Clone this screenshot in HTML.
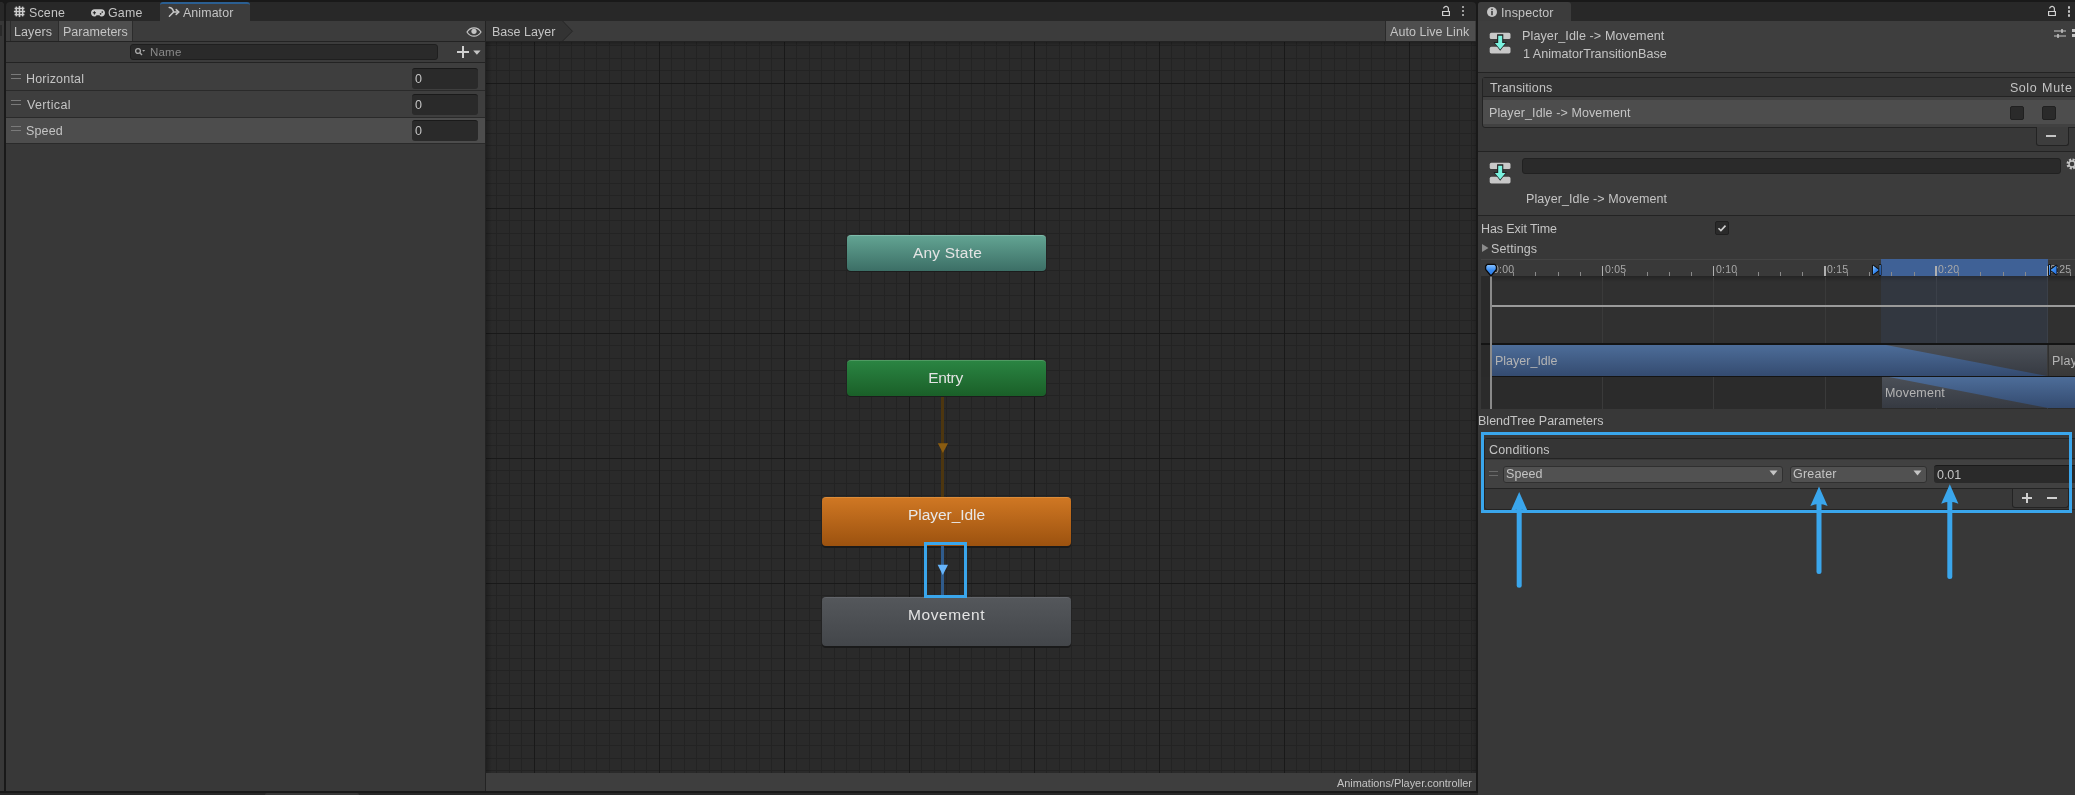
<!DOCTYPE html>
<html><head><meta charset="utf-8">
<style>
*{box-sizing:border-box;margin:0;padding:0}
html,body{width:2075px;height:795px;overflow:hidden;background:#191919;font-family:"Liberation Sans",sans-serif;font-size:12.5px;color:#c4c4c4}
.a{position:absolute}
.t{position:absolute;white-space:pre;line-height:16px;height:16px;letter-spacing:0.2px;will-change:transform}
</style></head><body>

<!-- ============ ANIMATOR DOCK ============ -->
<!-- left sliver -->
<div class="a" style="left:0;top:2px;width:4px;height:789px;background:#383838;border-top-right-radius:4px"></div>
<div class="a" style="left:0;top:2px;width:4px;height:19px;background:#282828;border-top-right-radius:4px"></div>
<div class="a" style="left:0;top:25px;width:2px;height:11px;background:#2a2a2a"></div>
<div class="a" style="left:0;top:793px;width:2075px;height:2px;background:#282828"></div>
<div class="a" style="left:265px;top:793px;width:94px;height:2px;background:#383838;border-radius:2px 2px 0 0"></div>

<!-- tab strip -->
<div class="a" style="left:6px;top:2px;width:1470px;height:19px;background:#282828;border-top-left-radius:4px;border-top-right-radius:4px"></div>
<div class="t" style="left:29.4px;top:5px;font-size:12.4px;letter-spacing:0.18px">Scene</div>
<div class="t" style="left:108.4px;top:5px;font-size:12.4px;letter-spacing:0.2px">Game</div>
<div class="a" style="left:160px;top:2px;width:90px;height:19px;background:#3c3c3c;border-top-left-radius:3px;border-top-right-radius:3px;border-top:2px solid #2b5f92"></div>
<div class="t" style="left:182.8px;top:5px;font-size:12.4px;letter-spacing:0.10px">Animator</div>

<!-- toolbar -->
<div class="a" style="left:6px;top:21px;width:1470px;height:20px;background:#3c3c3c"></div>
<div class="a" style="left:6px;top:41px;width:1470px;height:1px;background:#232323"></div>
<div class="a" style="left:10px;top:21px;width:1px;height:20px;background:#2c2c2c"></div>
<div class="a" style="left:58px;top:21px;width:1px;height:20px;background:#2c2c2c"></div>
<div class="a" style="left:132px;top:21px;width:1px;height:20px;background:#2c2c2c"></div>
<div class="t" style="left:14.2px;top:23.5px;letter-spacing:0.10px">Layers</div>
<div class="a" style="left:59px;top:21px;width:73px;height:20px;background:#4e4e4e"></div>
<div class="t" style="left:63.3px;top:23.5px;letter-spacing:0.02px">Parameters</div>
<div class="a" style="left:485px;top:21px;width:1px;height:770px;background:#232323"></div>

<!-- tab icons -->
<svg class="a" style="left:13px;top:5px" width="13" height="13"><rect x="4.1" y="4.2" width="4.8" height="4.6" fill="#0c0c0c"/><g fill="#cbcbcb"><rect x="2.6" y="1.6" width="1.5" height="9.8"/><rect x="5.7" y="0.9" width="1.6" height="11.2"/><rect x="8.9" y="1.6" width="1.5" height="9.8"/><rect x="1.6" y="2.7" width="9.8" height="1.5"/><rect x="0.9" y="5.7" width="11.2" height="1.6"/><rect x="1.6" y="8.8" width="9.8" height="1.5"/></g></svg>
<svg class="a" style="left:90px;top:8px" width="16" height="10"><path d="M4.6 1.2h6.8c2.2 0 3.6 1.6 3.6 3.6s-1.4 3.8-3.4 3.8c-1 0-1.6-.8-2.2-1.4H6.6c-.6.6-1.2 1.4-2.2 1.4C2.4 8.6 1 6.8 1 4.8S2.4 1.2 4.6 1.2z" fill="#cbcbcb"/><path d="M2.8 4.8h3.2M4.4 3.2v3.2" stroke="#262626" stroke-width="1.1"/><circle cx="10.6" cy="5.8" r=".85" fill="#262626"/><circle cx="12.3" cy="4" r=".85" fill="#262626"/></svg>
<svg class="a" style="left:167px;top:5px" width="14" height="13"><path d="M2.2 2.6c2.2 0 3.6 1.2 4.4 4.4H11.6M2.4 11.2L6.4 7.2" fill="none" stroke="#c8c8c8" stroke-width="1.5" stroke-linecap="round"/><path d="M9.2 4.6L11.8 7L9.2 9.4" fill="none" stroke="#c8c8c8" stroke-width="1.5" stroke-linecap="round" stroke-linejoin="round"/></svg>
<!-- eye -->
<svg class="a" style="left:466px;top:27px" width="16" height="10"><path d="M1 5C3 1.8 5.3.8 8 .8S13 1.8 15 5C13 8.2 10.7 9.2 8 9.2S3 8.2 1 5z" fill="none" stroke="#c4c4c4" stroke-width="1.2"/><circle cx="8" cy="4.3" r="2.6" fill="#c4c4c4"/></svg>
<!-- breadcrumb -->
<svg class="a" style="left:486px;top:21px" width="90" height="20"><path d="M0 0H76.6L86.4 10.2L76.6 20H0z" fill="#333333"/><path d="M76.6 0L86.4 10.2L76.6 20" fill="none" stroke="#262626" stroke-width="1"/></svg>
<div class="t" style="left:492.4px;top:23.5px;letter-spacing:0.02px">Base Layer</div>
<div class="a" style="left:1385px;top:21px;width:1px;height:20px;background:#2a2a2a"></div>
<div class="a" style="left:1386px;top:21px;width:89px;height:20px;background:#4e4e4e"></div>
<div class="t" style="left:1390.2px;top:23.5px;letter-spacing:0.05px">Auto Live Link</div>

<!-- left panel -->
<div class="a" style="left:6px;top:42px;width:479px;height:749px;background:#383838"></div>
<div class="a" style="left:6px;top:42px;width:479px;height:20px;background:#3c3c3c"></div>
<div class="a" style="left:130px;top:44px;width:308px;height:16px;background:#2a2a2a;border:1px solid #1f1f1f;border-radius:3px"></div>
<div class="t" style="left:149.5px;top:44px;font-size:11.5px;color:#8a8a8a">Name</div>
<div class="a" style="left:6px;top:62px;width:479px;height:1px;background:#232323"></div>
<div class="a" style="left:6px;top:63px;width:479px;height:27px;background:#3e3e3e"></div>
<div class="a" style="left:6px;top:90px;width:479px;height:1px;background:#2a2a2a"></div>
<div class="a" style="left:6px;top:91px;width:479px;height:26px;background:#3e3e3e"></div>
<div class="a" style="left:6px;top:117px;width:479px;height:1px;background:#2a2a2a"></div>
<div class="a" style="left:6px;top:118px;width:479px;height:25px;background:#4d4d4d"></div>
<div class="a" style="left:6px;top:143px;width:479px;height:1px;background:#2a2a2a"></div>
<div class="t" style="left:26.2px;top:70.6px;letter-spacing:0.19px">Horizontal</div>
<div class="t" style="left:26.7px;top:96.6px;letter-spacing:0.36px">Vertical</div>
<div class="t" style="left:26.2px;top:123.4px;letter-spacing:0.15px">Speed</div>
<div class="a" style="left:412px;top:68px;width:66px;height:21px;background:#2a2a2a;border-top:1px solid #1a1a1a;border-radius:3px"></div>
<div class="a" style="left:412px;top:94px;width:66px;height:21px;background:#2a2a2a;border-top:1px solid #1a1a1a;border-radius:3px"></div>
<div class="a" style="left:412px;top:120px;width:66px;height:21px;background:#2a2a2a;border-top:1px solid #1a1a1a;border-radius:3px"></div>
<div class="t" style="left:415.2px;top:70.8px">0</div>
<div class="t" style="left:415.2px;top:96.8px">0</div>
<div class="t" style="left:415.2px;top:122.8px">0</div>
<!-- plus dropdown -->
<div class="a" style="left:457px;top:51.2px;width:12.2px;height:1.8px;background:#d0d0d0"></div>
<div class="a" style="left:462.2px;top:46px;width:1.8px;height:12.2px;background:#d0d0d0"></div>
<svg class="a" style="left:473px;top:49.5px" width="8" height="5"><path d="M0.2 0.5h7.4L3.9 4.8z" fill="#c4c4c4"/></svg>
<!-- search icon -->
<svg class="a" style="left:134px;top:47px" width="12" height="10"><circle cx="4" cy="4" r="2.4" fill="none" stroke="#a8a8a8" stroke-width="1.3"/><path d="M5.8 5.8L8 8" stroke="#a8a8a8" stroke-width="1.4"/><path d="M8.2 3h3l-1.5 1.8z" fill="#a8a8a8"/></svg>
<!-- drag handles -->
<div class="a" style="left:11px;top:74px;width:10px;height:1px;background:#7a7a7a"></div>
<div class="a" style="left:11px;top:77.5px;width:10px;height:1px;background:#7a7a7a"></div>
<div class="a" style="left:11px;top:100px;width:10px;height:1px;background:#7a7a7a"></div>
<div class="a" style="left:11px;top:103.5px;width:10px;height:1px;background:#7a7a7a"></div>
<div class="a" style="left:11px;top:126px;width:10px;height:1px;background:#7a7a7a"></div>
<div class="a" style="left:11px;top:129.5px;width:10px;height:1px;background:#7a7a7a"></div>


<!-- graph -->
<div class="a" style="left:486px;top:42px;width:990px;height:731px;background:#2a2a2a"></div>

<svg class="a" style="left:486px;top:42px" width="990" height="731" shape-rendering="crispEdges"><path fill="#232323" d="M10 0h1V731h-1zM23 0h1V731h-1zM35 0h1V731h-1zM60 0h1V731h-1zM73 0h1V731h-1zM85 0h1V731h-1zM98 0h1V731h-1zM110 0h1V731h-1zM123 0h1V731h-1zM135 0h1V731h-1zM148 0h1V731h-1zM160 0h1V731h-1zM185 0h1V731h-1zM198 0h1V731h-1zM210 0h1V731h-1zM223 0h1V731h-1zM235 0h1V731h-1zM248 0h1V731h-1zM260 0h1V731h-1zM273 0h1V731h-1zM285 0h1V731h-1zM310 0h1V731h-1zM323 0h1V731h-1zM335 0h1V731h-1zM348 0h1V731h-1zM360 0h1V731h-1zM373 0h1V731h-1zM385 0h1V731h-1zM398 0h1V731h-1zM410 0h1V731h-1zM435 0h1V731h-1zM448 0h1V731h-1zM460 0h1V731h-1zM473 0h1V731h-1zM485 0h1V731h-1zM498 0h1V731h-1zM510 0h1V731h-1zM523 0h1V731h-1zM535 0h1V731h-1zM560 0h1V731h-1zM573 0h1V731h-1zM585 0h1V731h-1zM598 0h1V731h-1zM610 0h1V731h-1zM623 0h1V731h-1zM635 0h1V731h-1zM648 0h1V731h-1zM660 0h1V731h-1zM685 0h1V731h-1zM698 0h1V731h-1zM710 0h1V731h-1zM723 0h1V731h-1zM735 0h1V731h-1zM748 0h1V731h-1zM760 0h1V731h-1zM773 0h1V731h-1zM785 0h1V731h-1zM810 0h1V731h-1zM823 0h1V731h-1zM835 0h1V731h-1zM848 0h1V731h-1zM860 0h1V731h-1zM873 0h1V731h-1zM885 0h1V731h-1zM898 0h1V731h-1zM910 0h1V731h-1zM935 0h1V731h-1zM948 0h1V731h-1zM960 0h1V731h-1zM973 0h1V731h-1zM985 0h1V731h-1zM0 3h990v1H0zM0 16h990v1H0zM0 28h990v1H0zM0 53h990v1H0zM0 66h990v1H0zM0 78h990v1H0zM0 91h990v1H0zM0 103h990v1H0zM0 116h990v1H0zM0 128h990v1H0zM0 141h990v1H0zM0 153h990v1H0zM0 178h990v1H0zM0 191h990v1H0zM0 203h990v1H0zM0 216h990v1H0zM0 228h990v1H0zM0 241h990v1H0zM0 253h990v1H0zM0 266h990v1H0zM0 278h990v1H0zM0 303h990v1H0zM0 316h990v1H0zM0 328h990v1H0zM0 341h990v1H0zM0 353h990v1H0zM0 366h990v1H0zM0 378h990v1H0zM0 391h990v1H0zM0 403h990v1H0zM0 428h990v1H0zM0 441h990v1H0zM0 453h990v1H0zM0 466h990v1H0zM0 478h990v1H0zM0 491h990v1H0zM0 503h990v1H0zM0 516h990v1H0zM0 528h990v1H0zM0 553h990v1H0zM0 566h990v1H0zM0 578h990v1H0zM0 591h990v1H0zM0 603h990v1H0zM0 616h990v1H0zM0 628h990v1H0zM0 641h990v1H0zM0 653h990v1H0zM0 678h990v1H0zM0 691h990v1H0zM0 703h990v1H0zM0 716h990v1H0zM0 728h990v1H0z"/><path fill="#191919" d="M48 0h1V731h-1zM173 0h1V731h-1zM298 0h1V731h-1zM423 0h1V731h-1zM548 0h1V731h-1zM673 0h1V731h-1zM798 0h1V731h-1zM923 0h1V731h-1zM0 41h990v1H0zM0 166h990v1H0zM0 291h990v1H0zM0 416h990v1H0zM0 541h990v1H0zM0 666h990v1H0z"/></svg>
<!-- left shadow of graph -->
<div class="a" style="left:1471px;top:42px;width:5px;height:731px;background:linear-gradient(90deg,rgba(0,0,0,0),rgba(0,0,0,.18))"></div>
<div class="a" style="left:486px;top:42px;width:990px;height:4px;background:linear-gradient(rgba(0,0,0,.22),rgba(0,0,0,0))"></div>
<div class="a" style="left:486px;top:42px;width:6px;height:731px;background:linear-gradient(90deg,rgba(0,0,0,.25),rgba(0,0,0,0))"></div>
<!-- nodes -->
<div class="a" style="left:847px;top:236px;width:199px;height:36px;border-radius:4px;background:#1c1c1c"></div>
<div class="a" style="left:847px;top:235px;width:199px;height:36px;border-radius:4px;background:linear-gradient(#62a392,#3c6f66);border-top:1px solid #7fbcab"></div>
<div class="t" style="left:848px;top:244px;width:199px;text-align:center;font-size:15.5px;line-height:18px;height:18px;letter-spacing:0.2px;color:#e4e4e4">Any State</div>

<div class="a" style="left:941.3px;top:396px;width:2.6px;height:101px;background:#4d360f"></div>
<svg class="a" style="left:937px;top:442px" width="12" height="12"><path d="M0.8 1.2H11L5.9 11z" fill="#8a5c10"/></svg>

<div class="a" style="left:847px;top:361px;width:199px;height:36px;border-radius:4px;background:#1c1c1c"></div>
<div class="a" style="left:847px;top:360px;width:199px;height:36px;border-radius:4px;background:linear-gradient(#2a8442,#1a5f28);border-top:1px solid #4f9a62"></div>
<div class="t" style="left:845.5px;top:369px;width:199px;text-align:center;font-size:15.5px;line-height:18px;height:18px;letter-spacing:-0.3px;color:#e4e4e4">Entry</div>

<div class="a" style="left:822px;top:498px;width:249px;height:50px;border-radius:4px;background:#1a1a1a"></div>
<div class="a" style="left:822px;top:497px;width:249px;height:49px;border-radius:4px;background:linear-gradient(#cf7723,#9c520f);border-top:1px solid #dc8c38"></div>
<div class="t" style="left:822px;top:505.5px;width:249px;text-align:center;font-size:15.5px;line-height:18px;height:18px;letter-spacing:-0.05px;color:#e8e8e8">Player_Idle</div>

<div class="a" style="left:822px;top:598px;width:249px;height:50px;border-radius:4px;background:#1a1a1a"></div>
<div class="a" style="left:822px;top:597px;width:249px;height:49px;border-radius:4px;background:linear-gradient(#54575b,#43464a);border-top:1px solid #62656a"></div>
<div class="t" style="left:822px;top:605.5px;width:249px;text-align:center;font-size:15.5px;line-height:18px;height:18px;letter-spacing:0.6px;color:#e4e4e4">Movement</div>

<!-- selected transition -->
<div class="a" style="left:941px;top:546px;width:3px;height:51px;background:#2f5b8c"></div>
<svg class="a" style="left:937px;top:564px" width="12" height="12"><path d="M0.6 0.8H11L5.8 11z" fill="#66b4fa"/></svg>
<div class="a" style="left:924px;top:542px;width:43px;height:56px;border:3px solid #3aa6ec"></div>

<!-- graph bottom bar -->
<div class="a" style="left:486px;top:773px;width:990px;height:18px;background:#3e3e3e"></div>
<div class="t" style="right:603px;top:775px;font-size:10.9px;letter-spacing:0">Animations/Player.controller</div>

<!-- ============ INSPECTOR DOCK ============ -->
<div class="a" style="left:1478px;top:2px;width:597px;height:19px;background:#282828;border-top-left-radius:4px"></div>
<div class="a" style="left:1478px;top:2px;width:93px;height:19px;background:#3c3c3c;border-top-left-radius:3px;border-top-right-radius:3px"></div>
<div class="t" style="left:1500.9px;top:5px;font-size:12.5px;letter-spacing:0.14px">Inspector</div>
<div class="a" style="left:1478px;top:21px;width:597px;height:774px;background:#383838"></div>
<div class="a" style="left:1478px;top:21px;width:597px;height:51px;background:#3e3e3e"></div>
<div class="a" style="left:1478px;top:72px;width:597px;height:1px;background:#232323"></div>
<div class="t" style="left:1522.0px;top:28px;font-size:12.6px;letter-spacing:0.09px">Player_Idle -> Movement</div>
<div class="t" style="left:1523px;top:45.7px;font-size:12.6px;letter-spacing:0">1 AnimatorTransitionBase</div>


<!-- inspector tab strip icons -->
<svg class="a" style="left:1486px;top:6px" width="12" height="12"><circle cx="6" cy="6" r="5" fill="#c4c4c4"/><rect x="5.2" y="5" width="1.6" height="4.2" fill="#3c3c3c"/><rect x="5.2" y="2.6" width="1.6" height="1.5" fill="#3c3c3c"/></svg>
<svg class="a" style="left:1440px;top:4px" width="12" height="14"><path d="M2.6 7.5h6.8v4H2.6z" fill="none" stroke="#cfcfcf" stroke-width="1.2"/><path d="M8.4 7.3V5.2A2.3 2.3 0 0 0 3.6 4.5" fill="none" stroke="#cfcfcf" stroke-width="1.2"/></svg>
<div class="a" style="left:1462px;top:6px;width:2.2px;height:2.2px;background:#c4c4c4;border-radius:1px"></div>
<div class="a" style="left:1462px;top:10px;width:2.2px;height:2.2px;background:#c4c4c4;border-radius:1px"></div>
<div class="a" style="left:1462px;top:14px;width:2.2px;height:2.2px;background:#c4c4c4;border-radius:1px"></div>
<svg class="a" style="left:2046px;top:4px" width="12" height="14"><path d="M2.6 7.5h6.8v4H2.6z" fill="none" stroke="#cfcfcf" stroke-width="1.2"/><path d="M8.4 7.3V5.2A2.3 2.3 0 0 0 3.6 4.5" fill="none" stroke="#cfcfcf" stroke-width="1.2"/></svg>
<div class="a" style="left:2067.5px;top:6px;width:2.5px;height:2.5px;background:#c4c4c4;border-radius:1px"></div>
<div class="a" style="left:2067.5px;top:10px;width:2.5px;height:2.5px;background:#c4c4c4;border-radius:1px"></div>
<div class="a" style="left:2067.5px;top:14px;width:2.5px;height:2.5px;background:#c4c4c4;border-radius:1px"></div>

<!-- header icon -->
<svg class="a" style="left:1489px;top:32px" width="23" height="23"><rect x="0.7" y="0.8" width="20.8" height="6.3" rx="1.6" fill="#c8c8c8"/><rect x="0.7" y="14.8" width="20.8" height="6.6" rx="1.6" fill="#c8c8c8"/><path d="M8.1 2.2h6.2v7.9h3.6l-6.7 8.6l-6.7-8.6h3.6z" fill="#202020"/><path d="M9.2 3.8h4v7.2h3.3l-5.3 6.5l-5.3-6.5h3.3z" fill="#7af2df"/></svg>
<!-- header right icons -->
<svg class="a" style="left:2053px;top:28px" width="14" height="12"><path d="M1 3h12M1 8h12" stroke="#c4c4c4" stroke-width="1.2"/><path d="M9 1v4M5 6v4" stroke="#c4c4c4" stroke-width="1.5"/></svg>
<div class="a" style="left:2072px;top:29px;width:3px;height:2.5px;background:#c4c4c4"></div>
<div class="a" style="left:2072px;top:34px;width:3px;height:2.5px;background:#c4c4c4"></div>

<!-- transitions list -->
<div class="a" style="left:1482px;top:77px;width:600px;height:51px;border:1px solid #232323;border-radius:3px;background:#414141"></div>
<div class="a" style="left:1483px;top:78px;width:600px;height:19px;background:#353535;border-bottom:1px solid #232323"></div>
<div class="t" style="left:1489.8px;top:80px;letter-spacing:0.16px">Transitions</div>
<div class="t" style="left:2010.0px;top:80px;letter-spacing:0.53px">Solo</div>
<div class="t" style="left:2042.0px;top:80px;letter-spacing:0.73px">Mute</div>
<div class="a" style="left:1483px;top:100px;width:600px;height:24px;background:#4d4d4d"></div>
<div class="t" style="left:1488.8px;top:105px;letter-spacing:0.10px">Player_Idle -> Movement</div>
<div class="a" style="left:2010px;top:106px;width:14px;height:14px;background:#2a2a2a;border:1px solid #202020;border-radius:2px"></div>
<div class="a" style="left:2042px;top:106px;width:14px;height:14px;background:#2a2a2a;border:1px solid #202020;border-radius:2px"></div>
<div class="a" style="left:2036px;top:127px;width:33px;height:19px;background:#3d3d3d;border:1px solid #232323;border-top:none;border-radius:0 0 3px 3px"></div>
<div class="a" style="left:2046px;top:135px;width:10px;height:2px;background:#c4c4c4"></div>

<div class="a" style="left:1478px;top:151px;width:597px;height:1px;background:#232323"></div>
<div class="a" style="left:1478px;top:152px;width:597px;height:63px;background:#3c3c3c"></div>
<div class="a" style="left:1478px;top:215px;width:597px;height:1px;background:#232323"></div>
<svg class="a" style="left:1489px;top:162px" width="23" height="23"><rect x="0.7" y="0.8" width="20.8" height="6.3" rx="1.6" fill="#c8c8c8"/><rect x="0.7" y="14.8" width="20.8" height="6.6" rx="1.6" fill="#c8c8c8"/><path d="M8.1 2.2h6.2v7.9h3.6l-6.7 8.6l-6.7-8.6h3.6z" fill="#202020"/><path d="M9.2 3.8h4v7.2h3.3l-5.3 6.5l-5.3-6.5h3.3z" fill="#7af2df"/></svg>
<div class="a" style="left:1522px;top:158px;width:539px;height:16px;background:#2a2a2a;border:1px solid #212121;border-radius:3px"></div>
<svg class="a" style="left:2066px;top:158px" width="12" height="12"><circle cx="6" cy="6" r="4.2" fill="none" stroke="#c4c4c4" stroke-width="2.6" stroke-dasharray="2 1.3"/><circle cx="6" cy="6" r="3" fill="none" stroke="#c4c4c4" stroke-width="1.4"/></svg>
<div class="t" style="left:1525.9px;top:191px;letter-spacing:0.08px">Player_Idle -> Movement</div>

<div class="t" style="left:1481.4px;top:221px;letter-spacing:-0.09px">Has Exit Time</div>
<div class="a" style="left:1715px;top:221px;width:14px;height:14px;background:#2a2a2a;border:1px solid #202020;border-radius:2px"></div>
<svg class="a" style="left:1715px;top:221px" width="14" height="14"><path d="M3.5 7.2l2.4 2.4l4.6-5" fill="none" stroke="#d0d0d0" stroke-width="1.6"/></svg>
<svg class="a" style="left:1481px;top:243px" width="9" height="10"><path d="M1 1l6.5 4l-6.5 4z" fill="#8c8c8c"/></svg>
<div class="t" style="left:1491.1px;top:241px;letter-spacing:0.13px">Settings</div>

<!-- timeline -->
<div class="a" style="left:1481px;top:259px;width:594px;height:150px;background:#303030"></div>
<div class="a" style="left:1481px;top:259px;width:594px;height:17px;background:#393939;border-top:1px solid #444"></div>
<div class="a" style="left:1881px;top:259px;width:167px;height:17px;background:#3f6196"></div>
<div class="a" style="left:1481px;top:276px;width:594px;height:6px;background:linear-gradient(rgba(0,0,0,.25),rgba(0,0,0,0))"></div>
<div class="a" style="left:1481px;top:276px;width:10px;height:133px;background:#2a2a2a"></div>
<div class="a" style="left:1481px;top:377px;width:594px;height:32px;background:#2b2b2b"></div>
<div class="a" style="left:1490.2px;top:266px;width:1.5px;height:10px;background:#b0b0b0"></div>
<div class="t" style="left:1493.2px;top:262px;font-size:10.5px;line-height:14px;height:14px;color:#a8a8a8">0:00</div>
<div class="a" style="left:1490.7px;top:277px;width:1px;height:132px;background:#3a3a3a"></div>
<div class="a" style="left:1513.0px;top:272px;width:1px;height:4px;background:#8a8a8a"></div>
<div class="a" style="left:1535.2px;top:272px;width:1px;height:4px;background:#8a8a8a"></div>
<div class="a" style="left:1557.5px;top:272px;width:1px;height:4px;background:#8a8a8a"></div>
<div class="a" style="left:1579.7px;top:272px;width:1px;height:4px;background:#8a8a8a"></div>
<div class="a" style="left:1601.5px;top:266px;width:1.5px;height:10px;background:#b0b0b0"></div>
<div class="t" style="left:1604.5px;top:262px;font-size:10.5px;line-height:14px;height:14px;color:#a8a8a8">0:05</div>
<div class="a" style="left:1602.0px;top:277px;width:1px;height:132px;background:#3a3a3a"></div>
<div class="a" style="left:1624.3px;top:272px;width:1px;height:4px;background:#8a8a8a"></div>
<div class="a" style="left:1646.5px;top:272px;width:1px;height:4px;background:#8a8a8a"></div>
<div class="a" style="left:1668.8px;top:272px;width:1px;height:4px;background:#8a8a8a"></div>
<div class="a" style="left:1691.0px;top:272px;width:1px;height:4px;background:#8a8a8a"></div>
<div class="a" style="left:1712.8px;top:266px;width:1.5px;height:10px;background:#b0b0b0"></div>
<div class="t" style="left:1715.8px;top:262px;font-size:10.5px;line-height:14px;height:14px;color:#a8a8a8">0:10</div>
<div class="a" style="left:1713.3px;top:277px;width:1px;height:132px;background:#3a3a3a"></div>
<div class="a" style="left:1735.6px;top:272px;width:1px;height:4px;background:#8a8a8a"></div>
<div class="a" style="left:1757.8px;top:272px;width:1px;height:4px;background:#8a8a8a"></div>
<div class="a" style="left:1780.1px;top:272px;width:1px;height:4px;background:#8a8a8a"></div>
<div class="a" style="left:1802.3px;top:272px;width:1px;height:4px;background:#8a8a8a"></div>
<div class="a" style="left:1824.1px;top:266px;width:1.5px;height:10px;background:#b0b0b0"></div>
<div class="t" style="left:1827.1px;top:262px;font-size:10.5px;line-height:14px;height:14px;color:#a8a8a8">0:15</div>
<div class="a" style="left:1824.6px;top:277px;width:1px;height:132px;background:#3a3a3a"></div>
<div class="a" style="left:1846.9px;top:272px;width:1px;height:4px;background:#8a8a8a"></div>
<div class="a" style="left:1869.1px;top:272px;width:1px;height:4px;background:#8a8a8a"></div>
<div class="a" style="left:1891.4px;top:272px;width:1px;height:4px;background:#8a8a8a"></div>
<div class="a" style="left:1913.6px;top:272px;width:1px;height:4px;background:#8a8a8a"></div>
<div class="a" style="left:1935.4px;top:266px;width:1.5px;height:10px;background:#b0b0b0"></div>
<div class="t" style="left:1938.4px;top:262px;font-size:10.5px;line-height:14px;height:14px;color:#a8a8a8">0:20</div>
<div class="a" style="left:1935.9px;top:277px;width:1px;height:132px;background:#3a3a3a"></div>
<div class="a" style="left:1958.2px;top:272px;width:1px;height:4px;background:#8a8a8a"></div>
<div class="a" style="left:1980.4px;top:272px;width:1px;height:4px;background:#8a8a8a"></div>
<div class="a" style="left:2002.7px;top:272px;width:1px;height:4px;background:#8a8a8a"></div>
<div class="a" style="left:2024.9px;top:272px;width:1px;height:4px;background:#8a8a8a"></div>
<div class="a" style="left:2046.7px;top:266px;width:1.5px;height:10px;background:#b0b0b0"></div>
<div class="t" style="left:2049.7px;top:262px;font-size:10.5px;line-height:14px;height:14px;color:#a8a8a8">0:25</div>
<div class="a" style="left:2047.2px;top:277px;width:1px;height:132px;background:#3a3a3a"></div>
<div class="a" style="left:2069.5px;top:272px;width:1px;height:4px;background:#8a8a8a"></div>
<div class="a" style="left:1881px;top:276px;width:167px;height:68px;background:rgba(70,110,180,.13)"></div>
<div class="a" style="left:1491px;top:305px;width:584px;height:1.5px;background:#9a9a9a"></div>
<div class="a" style="left:1481px;top:343px;width:594px;height:2px;background:#141414"></div>
<svg class="a" style="left:1491px;top:345px" width="584" height="64" shape-rendering="geometricPrecision">
<defs><linearGradient id="gb" x1="0" y1="0" x2="0" y2="1"><stop offset="0" stop-color="#4d6d99"/><stop offset="1" stop-color="#344b70"/></linearGradient>
<linearGradient id="gg" x1="0" y1="0" x2="0" y2="1"><stop offset="0" stop-color="#4b5058"/><stop offset="1" stop-color="#363a42"/></linearGradient>
<linearGradient id="gp" x1="0" y1="0" x2="0" y2="1"><stop offset="0" stop-color="#4a4a4a"/><stop offset="1" stop-color="#383838"/></linearGradient></defs>
<rect x="0" y="0" width="556" height="31" fill="url(#gb)"/>
<path d="M395 0H556V31z" fill="url(#gg)"/>
<rect x="558" y="0" width="30" height="31" fill="url(#gp)"/>
<rect x="0" y="31" width="584" height="1" fill="#141414"/>
<rect x="391" y="32" width="200" height="31" fill="url(#gb)"/>
<path d="M391 32H398L557 63H391z" fill="url(#gg)"/>
</svg>
<div class="a" style="left:1490px;top:276px;width:2px;height:133px;background:#8a8a8a"></div>
<svg class="a" style="left:1484px;top:262px" width="15" height="16"><defs><linearGradient id="pk" x1="0" y1="0" x2="0" y2="1"><stop offset="0" stop-color="#8cc4ff"/><stop offset=".5" stop-color="#3a8cf0"/><stop offset="1" stop-color="#2a78e8"/></linearGradient></defs><path d="M3.2 2.4h7.6l1.6 1.8v3.2l-5.4 6.6l-5.4-6.6v-3.2z" fill="url(#pk)" stroke="#0a0a0a" stroke-width="1.3" stroke-linejoin="round"/></svg>
<svg class="a" style="left:1870px;top:262px" width="14" height="15"><defs><linearGradient id="mk" x1="0" y1="0" x2="1" y2="1"><stop offset="0" stop-color="#9fd0ff"/><stop offset=".45" stop-color="#3b8ef2"/><stop offset="1" stop-color="#2a6fe0"/></linearGradient></defs><g stroke="#0a0a0a" stroke-width="1.6" stroke-linejoin="round" fill="url(#mk)" paint-order="stroke"><path d="M3 3.5L9 8L3 12.5z"/><rect x="9.6" y="3" width="1.1" height="10"/></g></svg>
<svg class="a" style="left:2046px;top:262px" width="14" height="15"><g stroke="#0a0a0a" stroke-width="1.6" stroke-linejoin="round" fill="url(#mk)" paint-order="stroke"><path d="M10.5 3.5L4.5 8L10.5 12.5z"/><rect x="3" y="3" width="1.1" height="10"/></g></svg>
<div class="t" style="left:1495px;top:353px;color:#b4b4b4;letter-spacing:0">Player_Idle</div>
<div class="t" style="left:2052.2px;top:353px;color:#b4b4b4">Play</div>
<div class="t" style="left:1885.4px;top:385px;color:#b4b4b4">Movement</div>

<div class="t" style="left:1478.2px;top:413px;letter-spacing:0.01px">BlendTree Parameters</div>

<!-- conditions -->
<div class="a" style="left:1484px;top:438px;width:600px;height:72px;border:1px solid #232323;border-radius:3px;background:#383838"></div>
<div class="a" style="left:1485px;top:439px;width:600px;height:20px;background:#353535;border-bottom:1px solid #232323"></div>
<div class="t" style="left:1489.4px;top:441.5px;letter-spacing:0.16px">Conditions</div>
<div class="a" style="left:1485px;top:460px;width:600px;height:29px;background:#414141;border-bottom:1px solid #232323"></div>
<div class="a" style="left:1488.5px;top:471px;width:9.5px;height:1px;background:#6a6a6a"></div>
<div class="a" style="left:1488.5px;top:475px;width:9.5px;height:1px;background:#6a6a6a"></div>
<div class="a" style="left:1503px;top:465.5px;width:280px;height:17.5px;background:#515151;border:1px solid #303030;border-radius:3px"></div>
<div class="t" style="left:1505.9px;top:466px;letter-spacing:0.10px">Speed</div>
<svg class="a" style="left:1769px;top:470px" width="10" height="7"><path d="M0.5 0.5h8l-4 5z" fill="#c4c4c4"/></svg>
<div class="a" style="left:1790px;top:465.5px;width:137px;height:17.5px;background:#515151;border:1px solid #303030;border-radius:3px"></div>
<div class="t" style="left:1793.2px;top:466px;letter-spacing:0.18px">Greater</div>
<svg class="a" style="left:1913px;top:470px" width="10" height="7"><path d="M0.5 0.5h8l-4 5z" fill="#c4c4c4"/></svg>
<div class="a" style="left:1934px;top:465px;width:141px;height:18px;background:#2a2a2a;border-top:1px solid #1a1a1a;border-radius:3px 0 0 3px"></div>
<div class="t" style="left:1937px;top:466.5px;letter-spacing:-0.07px">0.01</div>
<div class="a" style="left:2011.5px;top:489px;width:57px;height:19px;background:#3d3d3d;border:1px solid #232323;border-top:none;border-radius:0 0 3px 3px"></div>
<div class="a" style="left:2022px;top:497px;width:10px;height:1.8px;background:#d0d0d0"></div>
<div class="a" style="left:2026.1px;top:493px;width:1.8px;height:10px;background:#d0d0d0"></div>
<div class="a" style="left:2047px;top:497px;width:10px;height:1.8px;background:#d0d0d0"></div>

<!-- blue highlight -->
<div class="a" style="left:1481px;top:432px;width:591px;height:81px;border:3px solid #3aa6ec"></div>
<svg class="a" style="left:1470px;top:470px" width="500" height="130"><g fill="#3aa6ec" stroke="#3aa6ec" stroke-linecap="round"><path d="M49.2 36.0V115.2" stroke-width="5" fill="none"/><path d="M49.2 22.0L57.8 41.5Q49.2 37.5 40.6 41.5z" stroke="none"/><path d="M349.0 30.4V101.5" stroke-width="5" fill="none"/><path d="M349.0 16.4L357.6 35.9Q349.0 31.9 340.4 35.9z" stroke="none"/><path d="M479.8 28.3V106.5" stroke-width="5" fill="none"/><path d="M479.8 14.3L488.4 33.8Q479.8 29.8 471.2 33.8z" stroke="none"/></g></svg>

</body></html>
